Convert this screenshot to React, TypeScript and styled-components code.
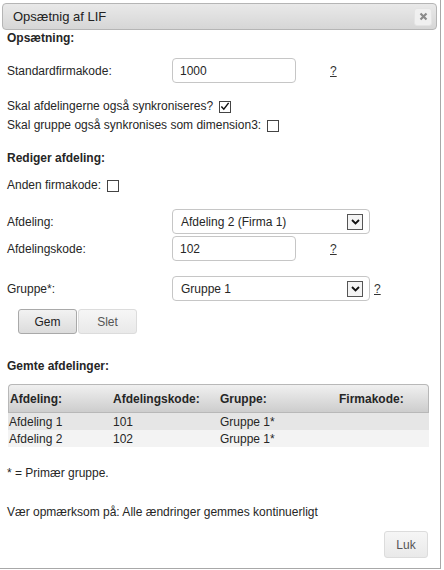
import styled, { createGlobalStyle } from 'styled-components';

const GlobalStyle = createGlobalStyle`
  html, body {
    margin: 0;
    padding: 0;
    background: #fff;
  }
  body {
    font-family: "Liberation Sans", Arial, sans-serif;
    font-size: 12px;
    color: #262626;
  }
`;

const Dialog = styled.div`
  width: 440px;
  height: 568px;
  border-right: 1px solid #a8a8a8;
  border-bottom: 1px solid #a8a8a8;
  background: #fff;
  display: flex;
  flex-direction: column;
`;

const TitleBar = styled.div`
  margin: 3px 3px 0 2px;
  height: 25px;
  border: 1px solid #b5b5b5;
  border-radius: 4px;
  background: linear-gradient(#e9e9e9, #d6d6d6);
  display: flex;
  align-items: center;
  justify-content: space-between;
  padding: 0 4px 0 10px;
`;

const Title = styled.span`
  font-size: 13px;
  color: #222;
`;

const CloseBtn = styled.button`
  width: 18px;
  height: 18px;
  padding: 0;
  border: 1px solid #e4e4e4;
  border-radius: 3px;
  background: #f0f0f0;
  display: flex;
  align-items: center;
  justify-content: center;
`;

const Body = styled.div`
  flex: 1;
  display: flex;
  flex-direction: column;
  padding: 0 12px 0 7px;
`;

const Heading = styled.div<{ $top: number }>`
  font-weight: bold;
  line-height: 15px;
  margin-top: ${({ $top }) => $top}px;
`;

const FieldRow = styled.div<{ $top: number }>`
  display: grid;
  grid-template-columns: 165px auto 1fr;
  align-items: center;
  margin-top: ${({ $top }) => $top}px;
`;

const TextInput = styled.div`
  box-sizing: border-box;
  width: 124px;
  height: 25px;
  border: 1px solid #c6c6c6;
  border-radius: 4px;
  padding-left: 7px;
  display: flex;
  align-items: center;
  background: #fff;
`;

const Select = styled.div`
  box-sizing: border-box;
  width: 198px;
  height: 25px;
  border: 1px solid #c6c6c6;
  border-radius: 4px;
  padding: 0 6px 0 8px;
  display: flex;
  align-items: center;
  justify-content: space-between;
`;

const ArrowBox = styled.span`
  width: 16px;
  height: 16px;
  border: 1px solid #555;
  box-sizing: border-box;
  background: #f4f4f4;
  display: flex;
  align-items: center;
  justify-content: center;
`;

const Help = styled.span<{ $gap: number }>`
  margin-left: ${({ $gap }) => $gap}px;
  text-decoration: underline;
  color: #333;
`;

const CheckLine = styled.div<{ $top: number }>`
  display: flex;
  align-items: center;
  gap: 6px;
  line-height: 19px;
  margin-top: ${({ $top }) => $top}px;
`;

const Box = styled.span`
  width: 12px;
  height: 12px;
  border: 1px solid #444;
  box-sizing: border-box;
  background: #fff;
  display: inline-flex;
  align-items: center;
  justify-content: center;
`;

const ButtonRow = styled.div`
  display: flex;
  gap: 1px;
  margin: 8px 0 0 11px;
`;

const Btn = styled.button<{ $pressed?: boolean }>`
  width: 59px;
  height: 25px;
  font-family: "Liberation Sans", Arial, sans-serif;
  font-size: 12px;
  color: ${({ $pressed }) => ($pressed ? '#222' : '#555')};
  border: 1px solid ${({ $pressed }) => ($pressed ? '#a9a9a9' : '#dcdcdc')};
  border-radius: 3px;
  background: ${({ $pressed }) =>
    $pressed ? 'linear-gradient(#f2f2f2, #dcdcdc)' : 'linear-gradient(#f6f6f6, #e9e9e9)'};
  padding: 0;
`;

const Table = styled.table`
  width: 421px;
  border-collapse: separate;
  border-spacing: 0;
  margin-top: 10px;
  margin-left: 1px;
`;

const HeadCell = styled.th<{ $w?: number }>`
  width: ${({ $w }) => ($w ? `${$w}px` : 'auto')};
  text-align: left;
  font-weight: bold;
  height: 27px;
  padding: 0 0 0 1px;
  background: linear-gradient(#f0f0f0, #cdcdcd);
  border-top: 1px solid #b8b8b8;
  border-bottom: 1px solid #b8b8b8;

  &:first-child {
    border-left: 1px solid #b8b8b8;
    border-top-left-radius: 4px;
  }
  &:last-child {
    border-right: 1px solid #b8b8b8;
    border-top-right-radius: 4px;
  }
`;

const Row = styled.tr<{ $odd: boolean }>`
  background: ${({ $odd }) => ($odd ? '#e6e6e6' : '#f3f3f3')};
`;

const Cell = styled.td`
  height: 17px;
  padding: 0 0 0 1px;
`;

const Note = styled.div<{ $top: number }>`
  line-height: 15px;
  margin-top: ${({ $top }) => $top}px;
`;

const Footer = styled.div`
  margin-top: auto;
  margin-bottom: 10px;
  display: flex;
  justify-content: flex-end;
`;

const CloseFooterBtn = styled(Btn)`
  width: 44px;
  height: 27px;
`;

const Chevron = () => (
  <svg width="9" height="6" viewBox="0 0 9 6">
    <path d="M1 1 L4.5 4.5 L8 1" fill="none" stroke="#111" strokeWidth="1.8" />
  </svg>
);

const Check = () => (
  <svg width="11" height="11" viewBox="0 0 11 11">
    <path d="M1.5 5.5 L4.2 8.5 L9.5 1.5" fill="none" stroke="#111" strokeWidth="1.6" />
  </svg>
);

const rows = [
  { afd: 'Afdeling 1', kode: '101', gruppe: 'Gruppe 1*' },
  { afd: 'Afdeling 2', kode: '102', gruppe: 'Gruppe 1*' },
];

export default function App() {
  return (
    <>
      <GlobalStyle />
      <Dialog>
        <TitleBar>
          <Title>Opsætnig af LIF</Title>
          <CloseBtn aria-label="Luk">
            <svg width="9" height="9" viewBox="0 0 9 9">
              <path d="M1.5 1.5 L7.5 7.5 M7.5 1.5 L1.5 7.5" stroke="#8a8a8a" strokeWidth="2.2" />
            </svg>
          </CloseBtn>
        </TitleBar>
        <Body>
          <Heading $top={1}>Opsætning:</Heading>
          <FieldRow $top={12}>
            <span>Standardfirmakode:</span>
            <TextInput>1000</TextInput>
            <Help $gap={34}>?</Help>
          </FieldRow>

          <CheckLine $top={14}>
            Skal afdelingerne også synkroniseres?
            <Box><Check /></Box>
          </CheckLine>
          <CheckLine $top={0}>
            Skal gruppe også synkronises som dimension3:
            <Box />
          </CheckLine>

          <Heading $top={16}>Rediger afdeling:</Heading>
          <CheckLine $top={10}>
            Anden firmakode:
            <Box />
          </CheckLine>

          <FieldRow $top={14}>
            <span>Afdeling:</span>
            <Select>
              Afdeling 2 (Firma 1)
              <ArrowBox><Chevron /></ArrowBox>
            </Select>
            <span />
          </FieldRow>
          <FieldRow $top={2}>
            <span>Afdelingskode:</span>
            <TextInput>102</TextInput>
            <Help $gap={34}>?</Help>
          </FieldRow>
          <FieldRow $top={15}>
            <span>Gruppe*:</span>
            <Select>
              Gruppe 1
              <ArrowBox><Chevron /></ArrowBox>
            </Select>
            <Help $gap={4}>?</Help>
          </FieldRow>

          <ButtonRow>
            <Btn $pressed>Gem</Btn>
            <Btn>Slet</Btn>
          </ButtonRow>

          <Heading $top={25}>Gemte afdelinger:</Heading>
          <Table>
            <thead>
              <tr>
                <HeadCell $w={102}>Afdeling:</HeadCell>
                <HeadCell $w={106}>Afdelingskode:</HeadCell>
                <HeadCell $w={118}>Gruppe:</HeadCell>
                <HeadCell>Firmakode:</HeadCell>
              </tr>
            </thead>
            <tbody>
              {rows.map((r, i) => (
                <Row key={r.afd} $odd={i % 2 === 0}>
                  <Cell>{r.afd}</Cell>
                  <Cell>{r.kode}</Cell>
                  <Cell>{r.gruppe}</Cell>
                  <Cell />
                </Row>
              ))}
            </tbody>
          </Table>

          <Note $top={19}>* = Primær gruppe.</Note>
          <Note $top={24}>Vær opmærksom på: Alle ændringer gemmes kontinuerligt</Note>

          <Footer>
            <CloseFooterBtn>Luk</CloseFooterBtn>
          </Footer>
        </Body>
      </Dialog>
    </>
  );
}
